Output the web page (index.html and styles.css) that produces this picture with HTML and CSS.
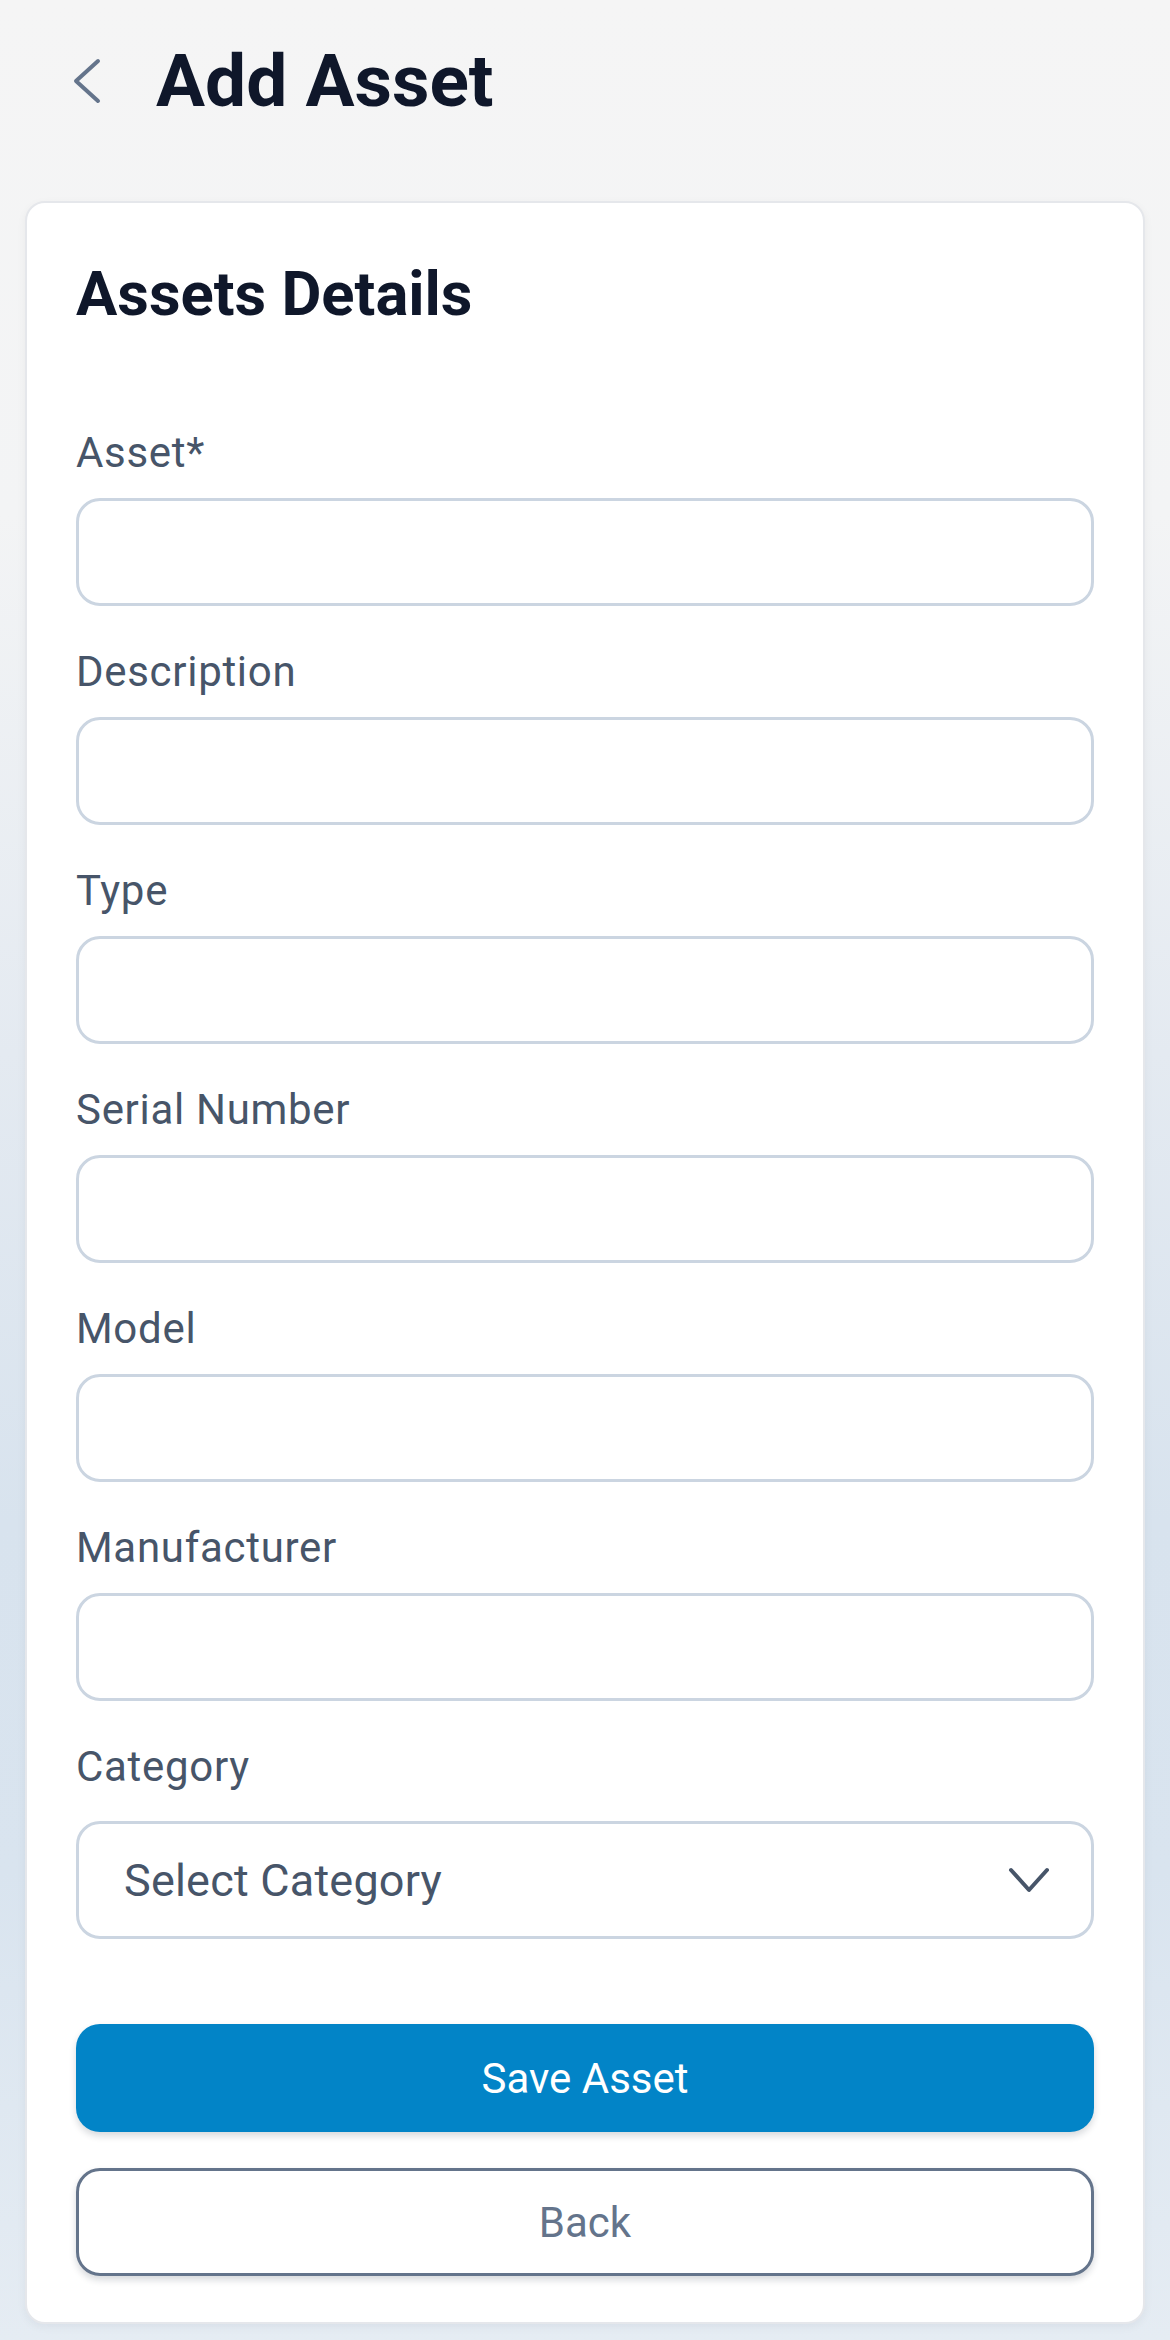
FILE: index.html
```html
<!DOCTYPE html>
<html lang="en">
<head>
<meta charset="utf-8">
<title>Add Asset</title>
<link rel="stylesheet" href="styles.css">
</head>
<body>
<div class="page">
  <header class="header">
    <svg class="back-icon" width="32" height="48" viewBox="0 0 32 48" aria-hidden="true">
      <path d="M27 4 L5 24 L27 44" fill="none" stroke="#64748b" stroke-width="4" stroke-linecap="round" stroke-linejoin="round"/>
    </svg>
    <h1 class="title">Add Asset</h1>
  </header>

  <main class="card">
    <h2 class="section-title">Assets Details</h2>
    <div class="fields">
      <div class="field">
        <label class="label">Asset*</label>
        <div class="input"></div>
      </div>
      <div class="field">
        <label class="label">Description</label>
        <div class="input"></div>
      </div>
      <div class="field">
        <label class="label">Type</label>
        <div class="input"></div>
      </div>
      <div class="field">
        <label class="label">Serial Number</label>
        <div class="input"></div>
      </div>
      <div class="field">
        <label class="label">Model</label>
        <div class="input"></div>
      </div>
      <div class="field">
        <label class="label">Manufacturer</label>
        <div class="input"></div>
      </div>
      <div class="field">
        <label class="label">Category</label>
        <div class="select">
          <span class="select-text">Select Category</span>
          <svg class="select-chevron" width="44" height="28" viewBox="0 0 44 28" aria-hidden="true">
            <path d="M4 4 L22 24 L40 4" fill="none" stroke="#475569" stroke-width="4" stroke-linecap="round" stroke-linejoin="round"/>
          </svg>
        </div>
      </div>
    </div>
    <div class="actions">
      <button class="btn btn-primary">Save Asset</button>
      <button class="btn btn-outline">Back</button>
    </div>
  </main>
</div>
</body>
</html>
```

FILE: styles.css
```css
* {
  box-sizing: border-box;
}

html, body {
  margin: 0;
  padding: 0;
}

body {
  font-family: Roboto, "Noto Sans", "Liberation Sans", sans-serif;
  background: linear-gradient(180deg, #f5f5f5 0%, #f3f4f5 22%, #e4eaf1 45%, #d8e3ee 65%, #d9e4ef 80%, #e5ecf3 100%);
  min-height: 2340px;
}

.page {
  width: 1170px;
  padding-bottom: 13px;
}

.header {
  display: flex;
  align-items: center;
  height: 96px;
  margin-top: 33px;
  padding-left: 71px;
}

.back-icon {
  flex: none;
  display: block;
}

.title {
  margin: 0 0 0 53px;
  font-size: 73px;
  line-height: 96px;
  font-weight: 700;
  color: #0f172a;
  letter-spacing: 0;
}

.card {
  margin: 72px 25px 0;
  background: #ffffff;
  border: 2px solid #e5e7eb;
  border-radius: 20px;
  padding: 49px 49px 46px;
  box-shadow: 0 3px 10px rgba(15, 23, 42, 0.05);
}

.section-title {
  margin: 0 0 87px;
  font-size: 61.5px;
  line-height: 84px;
  font-weight: 700;
  color: #0f172a;
}

.fields {
  display: flex;
  flex-direction: column;
  gap: 36px;
}

.field {
  display: flex;
  flex-direction: column;
}

.label {
  font-size: 42px;
  line-height: 60px;
  letter-spacing: 0.7px;
  color: #475569;
  margin-bottom: 15px;
}

.input {
  height: 108px;
  border: 3px solid #cbd5e1;
  border-radius: 24px;
  background: #ffffff;
}

.select {
  margin-top: 9px;
  height: 118px;
  border: 3px solid #cbd5e1;
  border-radius: 24px;
  background: #ffffff;
  display: flex;
  align-items: center;
  justify-content: space-between;
  padding: 0 40px 0 45px;
}

.select-text {
  font-size: 45px;
  letter-spacing: 0.2px;
  color: #475569;
}

.select-chevron {
  display: block;
  flex: none;
}

.actions {
  margin-top: 85px;
  display: flex;
  flex-direction: column;
  gap: 36px;
}

.btn {
  height: 108px;
  border-radius: 24px;
  font-family: Roboto, "Noto Sans", "Liberation Sans", sans-serif;
  font-size: 42px;
  font-weight: 400;
  width: 100%;
  cursor: pointer;
  box-shadow: 0 4px 7px rgba(15, 23, 42, 0.16);
}

.btn-primary {
  background: #0284c7;
  color: #ffffff;
  border: none;
}

.btn-outline {
  background: #ffffff;
  color: #64748b;
  border: 3px solid #64748b;
}
```
